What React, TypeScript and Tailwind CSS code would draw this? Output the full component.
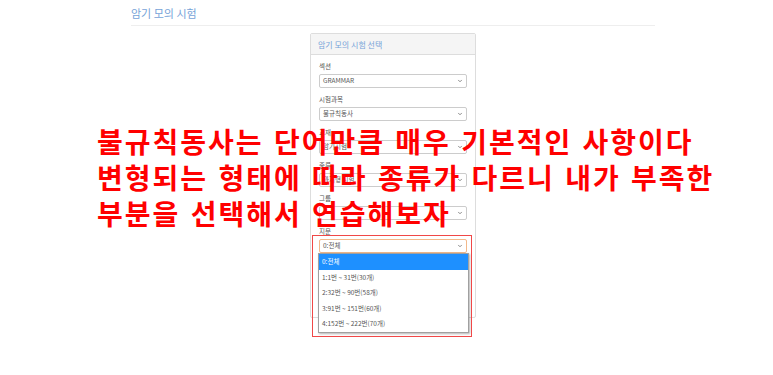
import { ChevronDown } from "lucide-react";

const groups = [
  { label: "섹션", value: "GRAMMAR" },
  { label: "시험과목", value: "불규칙동사" },
  { label: "교재", value: "암기시험" },
  { label: "종류", value: "과거형 시험" },
  { label: "그룹", value: "" },
];

const options = [
  "0:전체",
  "1:1번 ~ 31번(30개)",
  "2:32번 ~ 90번(58개)",
  "3:91번 ~ 151번(60개)",
  "4:152번 ~ 222번(70개)",
];

function FakeSelect({ value, focused }: { value: string; focused?: boolean }) {
  return (
    <div
      className={`flex h-[14px] items-center justify-between rounded-[2px] border px-[3px] text-[6.5px] text-[#555] ${
        focused ? "border-[#f3b98a]" : "border-[#ccc]"
      }`}
    >
      <span>{value}</span>
      <ChevronDown className="h-[6px] w-[6px] text-[#666]" strokeWidth={3} />
    </div>
  );
}

export default function App() {
  return (
    <div
      className="relative h-[375px] w-[773px] overflow-hidden bg-white"
      style={{ fontFamily: '"Noto Sans CJK KR", "Noto Sans", sans-serif' }}
    >
      <div className="ml-[131px] w-[524px]">
        <div className="h-[26px] border-b border-[#eee] text-[11px] leading-[26px] text-[#76a3d8]">
          암기 모의 시험
        </div>

        <div className="mx-auto mt-[7px] w-[166px] rounded-[2px] border border-[#ddd]">
          <div className="h-[21px] border-b border-[#ddd] bg-[#f5f5f5] px-[7px] text-[8px] leading-[21px] text-[#76a3d8]">
            암기 모의 시험 선택
          </div>
          <div className="px-[8px] pb-[64px] pt-[7px]">
            {groups.map((g) => (
              <div key={g.label} className="mb-[7px]">
                <div className="mb-[3px] h-[9px] text-[6.5px] leading-[9px] text-[#555]">
                  {g.label}
                </div>
                <FakeSelect value={g.value} />
              </div>
            ))}
            <div>
              <div className="mb-[3px] h-[9px] text-[6.5px] leading-[9px] text-[#555]">
                지문
              </div>
              <div className="relative">
                <FakeSelect value="0:전체" focused />
                <div className="absolute left-[-1px] top-full z-10 w-[151px] border border-[#a0a0a0] bg-white shadow-[1px_1px_2px_rgba(0,0,0,0.3)]">
                  {options.map((o, i) => (
                    <div
                      key={o}
                      className={`h-[15.5px] px-[3px] text-[6.5px] leading-[15.5px] ${
                        i === 0 ? "bg-[#1e90ff] text-white" : "text-[#555]"
                      }`}
                    >
                      {o}
                    </div>
                  ))}
                </div>
              </div>
            </div>
          </div>
        </div>
      </div>

      <div className="pointer-events-none absolute left-[312px] top-[235px] z-20 h-[102px] w-[160px] border-[1.5px] border-[#f04848]" />

      <div className="pointer-events-none absolute left-[97px] top-[123px] z-30 whitespace-nowrap text-[28px] font-bold leading-[36px] tracking-[2px] text-[#ff0000] [word-spacing:2px]">
        <div>불규칙동사는 단어만큼 매우 기본적인 사항이다</div>
        <div>변형되는 형태에 따라 종류가 다르니 내가 부족한</div>
        <div>부분을 선택해서 연습해보자</div>
      </div>
    </div>
  );
}
